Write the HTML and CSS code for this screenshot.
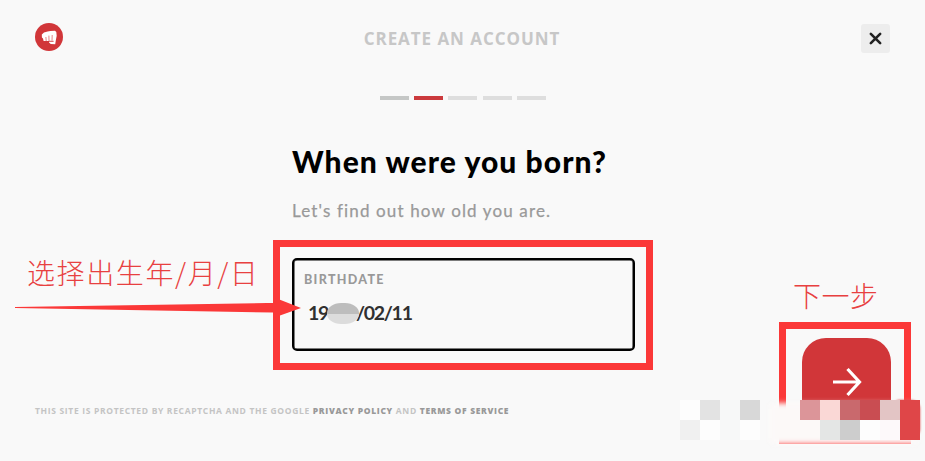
FILE: index.html
```html
<!DOCTYPE html>
<html lang="en">
<head>
    <meta charset="UTF-8">
    <title>Create an account</title>
    <link rel="stylesheet" href="styles.css">
</head>
<body>
    <header class="header">
        <svg class="logo" viewBox="0 0 28 28">
            <circle cx="14" cy="14" r="14" fill="#d13639"/>
            <path fill="#fff" d="M6.8 11.6 L9 9.4 L12.6 8.6 L15.4 8 L20 7.8 L21.3 9 L21.7 12.8 L20.8 17.6 L20.2 21.2 L15.8 21 L14 19.6 L14 18 L8.6 18 L8 15.6 L6.9 14.6 Z"/>
            <path fill="none" stroke="#d13639" stroke-width=".6" d="M10.9 14 L11.2 18 M13.9 12.6 L14 18 M17.2 12 L17 17.6"/>
            <path fill="none" stroke="#d13639" stroke-width=".9" d="M14 18.3 H18.6"/>
        </svg>
        <h1 class="title">CREATE AN ACCOUNT</h1>
        <button class="close" aria-label="Close">
            <svg viewBox="0 0 12 12"><path d="M1.7 1.7 L10.3 10.3 M10.3 1.7 L1.7 10.3"/></svg>
        </button>
    </header>

    <div class="steps">
        <span class="step done"></span>
        <span class="step active"></span>
        <span class="step"></span>
        <span class="step"></span>
        <span class="step"></span>
    </div>

    <main class="form">
        <h2 class="question">When were you born?</h2>
        <p class="hint">Let's find out how old you are.</p>
        <div class="field">
            <div class="label">BIRTHDATE</div>
            <div class="value"><span>19</span><span class="hidden-year"></span><span>/02/11</span></div>
        </div>
    </main>

    <footer class="footer">
        <p class="legal">THIS SITE IS PROTECTED BY RECAPTCHA AND THE GOOGLE <b>PRIVACY POLICY</b> AND <b>TERMS OF SERVICE</b></p>
    </footer>

    <button class="next" aria-label="Next">
        <svg viewBox="0 0 28 28"><path d="M0 14 H26 M14.5 1 L26.5 14 L14.5 27"/></svg>
    </button>

    <!-- Annotations -->
    <div class="frame frame-field"></div>
    <div class="frame frame-next"></div>
    <svg class="arrow" viewBox="0 0 286 24"><path d="M0 10 L252 6 L258 6 V0 L286 11 L258 21 V15.5 L0 11 Z"/></svg>
    <div class="note note-date">选择出生年/月/日</div>
    <div class="note note-next">下一步</div>

    <!-- Pixelated watermark -->
    <div class="haze"></div>
    <div class="smudge"></div>
    <div class="mosaic">
        <i class="c-white"></i><i class="c-grey"></i><i class="c-base"></i><i class="c-dark"></i><i></i><i></i><i class="c-rose"></i><i class="c-pink"></i><i class="c-brick"></i><i class="c-red"></i><i class="c-dust"></i><i class="c-bright"></i>
        <i class="c-light"></i><i class="c-white"></i><i class="c-base"></i><i class="c-white"></i><i></i><i></i><i></i><i class="c-mint"></i><i class="c-deep"></i><i class="c-white"></i><i class="c-blush"></i><i class="c-bright"></i>
    </div>
</body>
</html>
```
FILE: styles.css
```css
* {
    margin: 0;
    padding: 0;
    box-sizing: border-box;
}

body {
    position: relative;
    width: 925px;
    height: 461px;
    overflow: hidden;
    display: flex;
    flex-direction: column;
    background-color: #f9f9f9;
    font-family: Lato, "Liberation Sans", sans-serif;
}

button {
    border: none;
}

/* Header */
.header {
    display: flex;
    justify-content: space-between;
    align-items: center;
    height: 76px;
    padding: 0 35px;
}

.logo {
    width: 28px;
    height: 28px;
    margin-bottom: 2px;
}

.title {
    font-family: "Open Sans", sans-serif;
    font-size: 17px;
    font-weight: 700;
    letter-spacing: 0.95px;
    color: #c7c7c7;
}

.close {
    display: flex;
    align-items: center;
    justify-content: center;
    width: 29px;
    height: 29px;
    border-radius: 3px;
    background-color: #ededed;
}

.close svg {
    width: 13px;
    height: 13px;
    fill: none;
    stroke: #222;
    stroke-width: 2.4;
    stroke-linecap: round;
}

/* Progress */
.steps {
    display: flex;
    gap: 5.2px;
    margin: 20px 0 0 380px;
}

.step {
    width: 29px;
    height: 4px;
    background-color: #dedede;
}

.step.done {
    background-color: #c5c7c6;
}

.step.active {
    background-color: #cb3a3d;
}

/* Form */
.form {
    width: 343px;
    margin: 42px 0 0 292px;
}

.question {
    font-size: 30px;
    line-height: 38px;
    font-weight: 900;
    white-space: nowrap;
    letter-spacing: 1.08px;
    color: #000;
}

.hint {
    margin-top: 20px;
    font-size: 17px;
    line-height: 22px;
    letter-spacing: 1.14px;
    color: #999;
    -webkit-text-stroke: 0.25px #999;
}

.field {
    height: 93px;
    margin-top: 36px;
    padding: 11.5px 10px;
    border: 2px solid #000;
    border-radius: 5px;
    box-shadow: inset 0 0 0 0.5px #000;
}

.label {
    font-size: 12.5px;
    line-height: 16px;
    font-weight: 900;
    letter-spacing: 1.3px;
    color: #999;
}

.value {
    display: flex;
    align-items: center;
    margin: 13.5px 0 0 4px;
    font-size: 19.5px;
    line-height: 24px;
    font-weight: 700;
    letter-spacing: -1.3px;
    color: #303030;
}

.hidden-year {
    width: 32px;
    height: 21px;
    margin: 1px -3px 0 -1px;
    border-radius: 14px / 10px;
    background: linear-gradient(#bdbdbd 52%, #dcdcdc 52%);
    z-index: 1;
}

/* Footer */
.footer {
    margin: 53px 0 0 35px;
}

.legal {
    font-family: "Open Sans", sans-serif;
    font-size: 8.5px;
    line-height: 14px;
    font-weight: 700;
    letter-spacing: 0.67px;
    white-space: nowrap;
    color: #c4c4c4;
}

.legal b {
    color: #999;
}

/* Next button */
.next {
    position: absolute;
    left: 802px;
    top: 338px;
    width: 89px;
    height: 88px;
    border-radius: 24px;
    background-color: #d13639;
}

.next svg {
    display: block;
    width: 28px;
    height: 28px;
    margin: 0 auto;
    fill: none;
    stroke: #fff;
    stroke-width: 3.2;
    overflow: visible;
}

/* Annotations */
.frame {
    position: absolute;
    border: 7px solid #fb3838;
}

.frame-field {
    left: 273px;
    top: 240px;
    width: 380px;
    height: 130px;
}

.frame-next {
    left: 779px;
    top: 322px;
    width: 132px;
    height: 122px;
}

.arrow {
    position: absolute;
    left: 15px;
    top: 297px;
    width: 286px;
    height: 24px;
    fill: #fb3838;
}

.note {
    position: absolute;
    font-family: "Noto Sans CJK SC", sans-serif;
    font-size: 28px;
    line-height: 36px;
    font-weight: 300;
    white-space: nowrap;
    color: #e84040;
}

.note-date {
    left: 27px;
    top: 254px;
    letter-spacing: 1.6px;
}

.note-next {
    left: 793px;
    top: 277px;
    letter-spacing: 0.5px;
}

/* Mosaic */
.haze {
    position: absolute;
    left: 772px;
    top: 405px;
    width: 144px;
    height: 37px;
    background: #fcf9f8;
    box-shadow: 0 0 3px 2px #fcf9f8;
    filter: blur(2px);
}

.smudge {
    position: absolute;
    left: 896px;
    top: 400px;
    width: 24px;
    height: 38px;
    border-radius: 3px 9px 9px 3px;
    background: #df4648;
    filter: blur(1px);
}

.mosaic {
    position: absolute;
    left: 680px;
    top: 400px;
    display: grid;
    grid-template-columns: repeat(12, 20px);
    grid-auto-rows: 20px;
}

.c-white { background: #fdfdfd; }
.c-base { background: #f7f8f8; }
.c-light { background: #f0f0f0; }
.c-grey { background: #e3e3e3; }
.c-dark { background: #d8d8d8; }
.c-rose { background: #dc9599; }
.c-pink { background: #fad8d6; }
.c-brick { background: #c9696d; }
.c-red { background: #c94d52; }
.c-dust { background: #e3c5c5; }
.c-bright { background: #df4648; }
.c-mint { background: #e4e6e5; }
.c-deep { background: #cdcdcd; }
.c-blush { background: #fdf9fa; }
```
